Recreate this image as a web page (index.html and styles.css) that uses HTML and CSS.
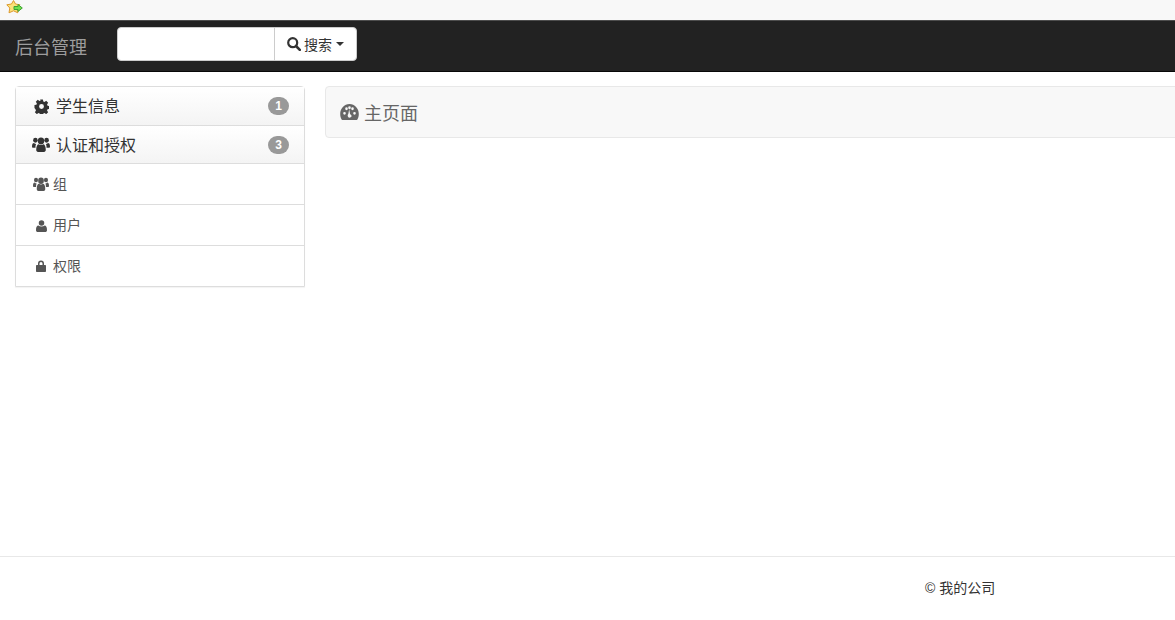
FILE: index.html
```html
<!DOCTYPE html>
<html lang="zh">
<head>
<meta charset="utf-8">
<title>后台管理</title>
<link rel="stylesheet" href="styles.css">
</head>
<body>
<div class="page">
  <div class="topstrip">
    <svg class="star" viewBox="0 0 17 14" width="17" height="14">
      <path d="M7.500 0.500 L9.500 4 L14 4.800 L11 8 L11.800 12.800 L7.500 10.800 L3 12.800 L3.800 8 L0.800 4.800 L5.500 4 Z" fill="#fbe27a" stroke="#dd9a2e" stroke-width="1"/>
      <path d="M8 6.500 H12 V4.500 L16.300 8 L12 11.500 V9.500 H8 Z" fill="#6fe04e" stroke="#3fa033" stroke-width="1"/>
    </svg>
  </div>
  <nav class="navbar">
    <span class="brand">后台管理</span>
    <form class="search">
      <input class="search-input" type="text">
      <button class="search-btn" type="button">
        <svg class="ico-search" viewBox="0 0 14 14" width="14" height="14"><circle cx="5.700" cy="5.700" r="4.500" fill="none" stroke="#333" stroke-width="2.200"/><path d="M9 9 L12.800 12.800" stroke="#333" stroke-width="2.600" stroke-linecap="round"/></svg>
        <span>搜索</span>
        <i class="caret"></i>
      </button>
    </form>
  </nav>
  <div class="content">
    <aside class="sidebar">
      <div class="head">
        <span class="ic">
          <svg viewBox="0 0 16 16" width="15" height="15"><path fill="#333" fill-rule="evenodd" d="M6.500 0.500h3l.4 2.100 1.300.55 1.800-1.200 2.100 2.100-1.200 1.800.55 1.300 2.050.4v3l-2.050.4-.55 1.300 1.200 1.800-2.100 2.100-1.800-1.200-1.300.55-.4 2.050h-3l-.4-2.050-1.300-.55-1.800 1.200-2.100-2.100 1.200-1.800-.55-1.300L.5 9.500v-3l2.050-.4.55-1.300-1.200-1.800 2.100-2.100 1.800 1.200 1.300-.55zM8 5.400a2.600 2.600 0 1 0 0 5.200 2.600 2.600 0 0 0 0-5.200z"/></svg>
        </span>
        <span class="label">学生信息</span>
        <span class="badge">1</span>
      </div>
      <div class="head">
        <span class="ic">
          <svg viewBox="0 0 18 14" width="18" height="15" preserveAspectRatio="none"><g fill="#333"><circle cx="3.400" cy="3" r="2.300"/><circle cx="14.600" cy="3" r="2.300"/><path d="M0 9c0-2.400.8-3.400 2-3.400.6.600 1.300.9 2.100.9-.5 1-.7 2-.6 3.500H1.200C.5 10 0 9.700 0 9zM18 9c0-2.400-.8-3.400-2-3.400-.6.600-1.300.9-2.100.9.5 1 .7 2 .6 3.500h2.300c.7 0 1.200-.3 1.200-1z"/><circle cx="9" cy="3.700" r="3.200"/><path d="M4.200 12c0-3.500 1.200-5.300 2.600-5.300.6.500 1.300.8 2.200.8s1.600-.3 2.200-.8c1.400 0 2.600 1.800 2.600 5.300 0 1.200-.8 2-1.800 2H6c-1 0-1.800-.8-1.800-2z"/></g></svg>
        </span>
        <span class="label">认证和授权</span>
        <span class="badge">3</span>
      </div>
      <div class="item">
        <span class="ic">
          <svg viewBox="0 0 18 14" width="16" height="14" preserveAspectRatio="none"><g fill="#555"><circle cx="3.400" cy="3" r="2.300"/><circle cx="14.600" cy="3" r="2.300"/><path d="M0 9c0-2.400.8-3.400 2-3.400.6.600 1.300.9 2.100.9-.5 1-.7 2-.6 3.500H1.200C.5 10 0 9.700 0 9zM18 9c0-2.400-.8-3.400-2-3.400-.6.600-1.300.9-2.100.9.5 1 .7 2 .6 3.500h2.300c.7 0 1.200-.3 1.200-1z"/><circle cx="9" cy="3.700" r="3.200"/><path d="M4.200 12c0-3.500 1.200-5.300 2.600-5.300.6.500 1.300.8 2.200.8s1.600-.3 2.200-.8c1.400 0 2.600 1.800 2.600 5.300 0 1.200-.8 2-1.800 2H6c-1 0-1.800-.8-1.800-2z"/></g></svg>
        </span>
        <span class="label">组</span>
      </div>
      <div class="item">
        <span class="ic">
          <svg class="nudge" viewBox="0 0 12 13" width="11" height="12"><g fill="#555"><circle cx="6" cy="3.200" r="3"/><path d="M0 11c0-3.300 1-5 2.600-5 .8.700 2 1.100 3.400 1.100S8.600 6.700 9.400 6c1.600 0 2.600 1.700 2.600 5 0 1.200-.8 2-1.900 2H1.900C.8 13 0 12.200 0 11z"/></g></svg>
        </span>
        <span class="label">用户</span>
      </div>
      <div class="item">
        <span class="ic">
          <svg class="shift" viewBox="0 0 10 12" width="10" height="12"><path fill="#555" fill-rule="evenodd" d="M2 5V3.500a3 3 0 0 1 6 0V5h1c.6 0 1 .4 1 1v5c0 .6-.4 1-1 1H1c-.6 0-1-.4-1-1V6c0-.6.4-1 1-1zm1.500 0h3V3.500a1.500 1.500 0 0 0-3 0z"/></svg>
        </span>
        <span class="label">权限</span>
      </div>
    </aside>
    <main class="main">
      <div class="crumb">
        <svg class="ico-dash" viewBox="0 1 19 14" width="19" height="16" preserveAspectRatio="none"><path fill="#666" fill-rule="evenodd" d="M9.500 1C4.300 1 .2 4.900.2 9.800c0 1.800.5 3.400 1.400 4.700.2.300.4.400.7.400h14.400c.3 0 .5-.1.700-.4.900-1.300 1.400-2.900 1.400-4.700C18.800 4.900 14.700 1 9.500 1zM4.500 10.500a1.300 1.300 0 1 1 0-2.600 1.300 1.300 0 0 1 0 2.600zm2-4a1.300 1.300 0 1 1 0-2.600 1.300 1.300 0 0 1 0 2.600zm3-1a1.300 1.300 0 1 1 0-2.600 1.300 1.300 0 0 1 0 2.600zm1.200 7.200a2 2 0 0 1-2.800-.8c-.4-.8-.2-1.600.4-2.200l.9-4.200.9 4.400c.8.200 1.400.8 1.500 1.600 0 .5-.4.900-.9 1.200zM12.500 6.500a1.300 1.300 0 1 1 0-2.600 1.300 1.300 0 0 1 0 2.600zm2 4a1.300 1.300 0 1 1 0-2.600 1.300 1.300 0 0 1 0 2.600z"/></svg>
        <span>主页面</span>
      </div>
    </main>
  </div>
  <footer class="footer">
    <span class="copy">© 我的公司</span>
  </footer>
</div>
</body>
</html>
```
FILE: styles.css
```css
* { box-sizing: border-box; }
html, body { margin: 0; padding: 0; height: 100%; overflow: hidden; background: #fff; }
body { font-family: "Liberation Sans", "Noto Sans CJK SC", sans-serif; font-size: 14px; color: #333; }
.page { width: 1175px; height: 620px; overflow: hidden; display: flex; flex-direction: column; }
.topstrip { height: 20px; background: #f8f8f8; padding: 0 0 0 6px; display: flex; align-items: flex-start; flex: none; }
.star { display: block; }
.navbar { height: 52px; flex: none; background: #222; border-top: 1px solid #4d4d4d; border-bottom: 1px solid #080808; display: flex; align-items: center; padding-left: 15px; }
.brand { color: #9d9d9d; font-size: 18px; width: 102px; }
.search { display: flex; height: 34px; margin-top: -4px; }
.search-input { width: 158px; height: 34px; border: 1px solid #ccc; border-radius: 4px 0 0 4px; background: #fff; padding: 0; }
.search-btn { width: 83px; height: 34px; margin-left: -1px; border: 1px solid #ccc; border-radius: 0 4px 4px 0; background: #fff; color: #333; font: inherit; display: flex; align-items: center; justify-content: center; gap: 3px; padding: 0; }
.caret { width: 0; height: 0; margin-left: 1px; border-top: 4px solid #333; border-left: 4px solid transparent; border-right: 4px solid transparent; }
.content { flex: 1; display: flex; align-items: flex-start; padding: 14px 0 0 15px; gap: 20px; }
.sidebar { width: 290px; flex: none; border: 1px solid #ddd; border-radius: 4px 4px 0 0; box-shadow: 0 1px 1px rgba(0,0,0,.05); }
.head { height: 39px; display: flex; align-items: center; padding: 0 15px 0 0; background: linear-gradient(#fff, #f4f4f4); border-bottom: 1px solid #ddd; font-size: 16px; color: #333; }
.head + .head { height: 38px; }
.ic { width: 37px; flex: none; display: flex; justify-content: center; padding-left: 13px; margin-right: 3px; }
.label { padding-bottom: 2px; }
.head .label { flex: 1; }
.badge { min-width: 21px; height: 18px; border-radius: 10px; background: #999; color: #fff; font-size: 12px; font-weight: bold; display: flex; align-items: center; justify-content: center; }
.item { height: 41px; display: flex; align-items: center; border-bottom: 1px solid #ddd; color: #555; font-size: 14px; }
.item:last-child { border-bottom: 0; height: 40px; }
.item .ic { margin-right: 0; }
.nudge { margin-top: 1px; }
.shift { margin-left: -1px; margin-top: -1px; }
.main { flex: none; width: 870px; }
.crumb { height: 52px; background: #f8f8f8; border: 1px solid #e8e8e8; border-radius: 4px; display: flex; align-items: center; padding-left: 14px; gap: 5px; font-size: 18px; color: #666; }
.footer { height: 64px; flex: none; border-top: 1px solid #e8e8e8; padding: 22px 0 0 925px; font-size: 14px; color: #333; line-height: 18px; }
.copy { display: block; }
```
